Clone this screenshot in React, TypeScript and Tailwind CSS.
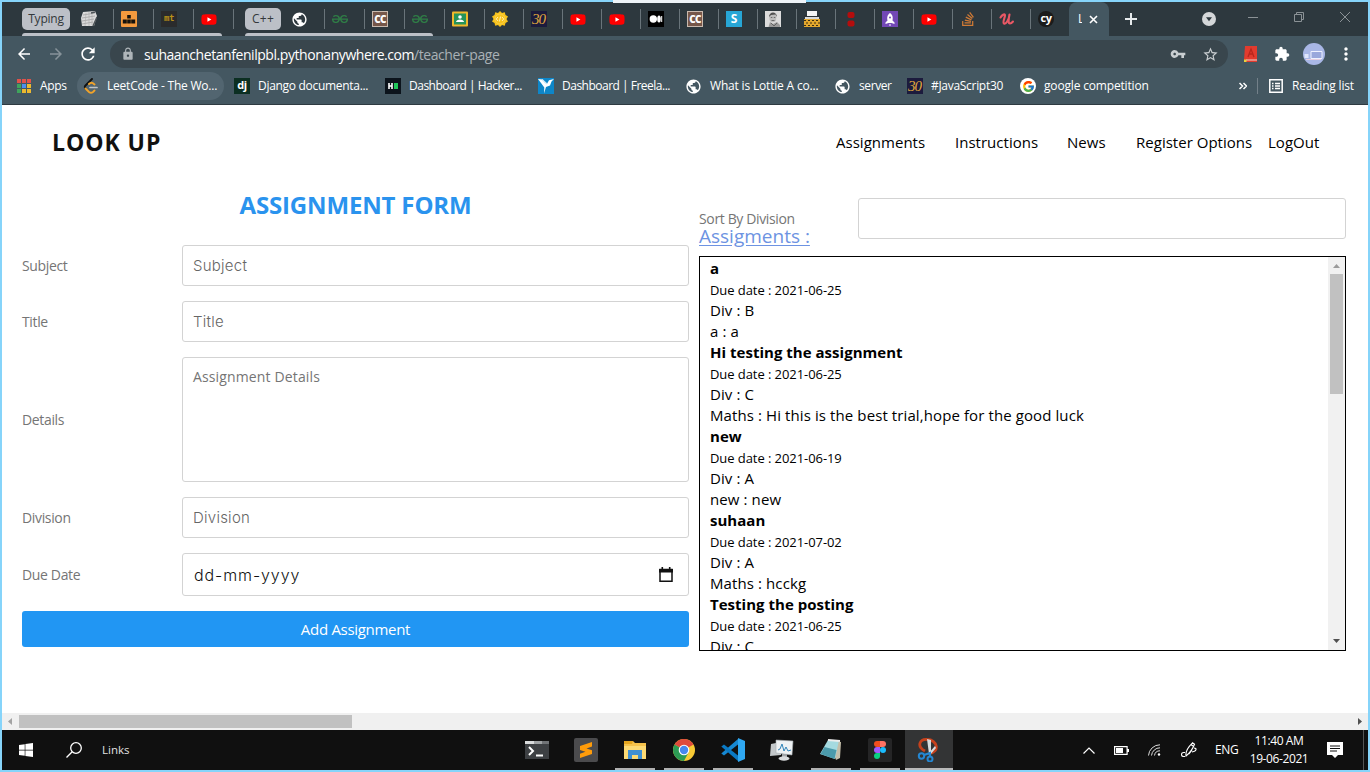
import React from "react";
import { FaYoutube, FaStackOverflow, FaWindows } from "react-icons/fa";
import { FcGoogle } from "react-icons/fc";
import {
  MdVpnKey, MdExtension, MdLock, MdStarBorder, MdMoreVert, MdArrowBack, MdArrowForward,
  MdRefresh, MdPublic,
} from "react-icons/md";
import { SiGeeksforgeeks } from "react-icons/si";

const Youtube = () => <FaYoutube className="h-[17px] w-4 bg-[linear-gradient(#fff,#fff)] bg-[length:6px_6px] bg-center bg-no-repeat text-[#f00]" />;
const Geeks = () => <SiGeeksforgeeks className="size-4 text-[#2f7d46]" />;
const Globe = () => <MdPublic className="size-[17px] text-white" />;
const StackOverflow = () => <FaStackOverflow className="size-4 text-[#d07a35]" />;
const CodeChef = () => (
  <div className="flex size-4 items-center justify-center border border-[#c9b9ae] bg-[#76574a] font-['Open_Sans'] text-[10px] font-extrabold tracking-[-0.8px] text-white">CC</div>
);
const Thirty = () => (
  <div className="flex size-4 items-center justify-center bg-[#1c1b3d] pr-px font-['Liberation_Serif'] text-[15px] tracking-[-1px] text-[#e0a83c] italic">30</div>
);
const Keyboard = () => (
  <svg viewBox="0 0 16 16" className="size-4">
    <path d="M2 1 14 0l2 5-3 10H1L0 7z" fill="#dadada" />
    <path d="m2 4 12-2M1 7l13-2M1 10l12-2M1 13l11-2" stroke="#a0a0a0" strokeWidth=".8" />
    <path d="m5 2-1 13M8 1v14M11 1v13" stroke="#b0b0b0" strokeWidth=".7" />
    <path d="m10 2 4-1M12 15l4-9" stroke="#4d5357" strokeWidth="1.500" />
  </svg>
);
const Podium = () => (
  <svg viewBox="0 0 16 16" className="size-4">
    <rect width="16" height="16" rx="1" fill="#f39a3e" />
    <path d="M6.200 4h3.600v3.600H6.200zM1.800 8.500h4v4h-4zM6.200 8.500h3.600v4H6.200zM10.200 8.500h4v4h-4z" fill="#15120c" />
  </svg>
);
const MonkeyType = () => (
  <div className="flex size-4 items-center justify-center bg-[#2a2b2c] font-['DejaVu_Sans_Mono'] text-[9px] font-bold tracking-[-0.5px] text-[#b89018]">mt</div>
);
const Classroom = () => (
  <svg viewBox="0 0 16 16" className="size-4">
    <rect width="16" height="15" y=".5" rx="1" fill="#f1b92c" />
    <rect x="2" y="2.500" width="12" height="11" fill="#27945a" />
    <circle cx="8" cy="6" r="1.800" fill="#fff" />
    <path d="M4 11c0-3.500 8-3.500 8 0z" fill="#fff" />
  </svg>
);
const Sun = () => (
  <svg viewBox="0 0 16 16" className="size-4">
    <path d="m8 0 2 2 2.800-.8.700 2.800L16 5.500 14.500 8l1.500 2.500-2.500 1.500-.7 2.800L10 14l-2 2-2-2-2.800.8-.7-2.800L0 10.500 1.500 8 0 5.500 2.500 4l.7-2.800L6 2z" fill="#f8c21a" />
    <circle cx="8" cy="8" r="5" fill="none" stroke="#f9d35c" strokeWidth=".7" />
    <path d="M6 6 4.300 8 6 10M10 6l1.700 2L10 10M8.600 5.500 7.400 10.500" fill="none" stroke="#fff2c4" strokeWidth=".9" />
  </svg>
);
const Medium = () => (
  <svg viewBox="0 0 16 16" className="size-4">
    <rect width="16" height="16" fill="#000" />
    <circle cx="5.300" cy="8" r="3.700" fill="#fff" />
    <ellipse cx="11" cy="8" rx="1.800" ry="3.500" fill="#fff" />
    <path d="M13.700 5v6" stroke="#fff" />
  </svg>
);
const LetterS = () => (
  <div className="flex size-4 items-center justify-center bg-[#27a6d6] font-['Open_Sans'] text-[12px] font-bold text-white">S</div>
);
const Portrait = () => (
  <svg viewBox="0 0 16 16" className="size-4">
    <rect width="16" height="16" fill="#dcdcdc" />
    <path d="M3.500 16 5 11l3 2 4-2 3 3v2z" fill="#9a9a9a" />
    <ellipse cx="7.800" cy="6.800" rx="3.500" ry="4.500" fill="#bcbcbc" />
    <path d="M4 6c0-6 8-6 8 0l-1.500-2.500L6 4z" fill="#505050" />
    <path d="M5.800 6.500h1.500m1.500 0h1.500M6.500 9.500h3M6 12l3 3 3-3" stroke="#555" strokeWidth=".8" fill="none" />
  </svg>
);
const Typewriter = () => (
  <svg viewBox="0 0 16 16" className="size-4">
    <path d="M3 0h10v5H3z" fill="#f4f4f4" />
    <path d="M0 4h3v1h10V4h3v2H0z" fill="#2c3235" />
    <path d="M1 6h14v2H1z" fill="#d8dadb" />
    <path d="M0 8h16v8H0z" fill="#e3a72d" />
    <path d="M0 9.500h16M0 14.500h16" stroke="#3a2c12" strokeDasharray="2 2" />
    <path d="M2 12h14" stroke="#3a2c12" strokeDasharray="2 2" />
  </svg>
);
const RedDots = () => (
  <svg viewBox="0 0 16 16" className="size-4">
    <rect x="4.500" y="1" width="7" height="6" rx="2" fill="#b40d0d" />
    <rect x="4.500" y="9.500" width="7" height="6" rx="2" fill="#b40d0d" />
  </svg>
);
const Rocket = () => (
  <svg viewBox="0 0 16 16" className="size-4">
    <rect width="16" height="16" fill="#7248b6" />
    <path d="M8 2c3 2 3 5 2.500 7.500l2 2v1.500l-3-1H6.500l-3 1v-1.500l2-2C5 7 5 4 8 2z" fill="#fff" />
    <circle cx="8" cy="6.500" r="1" fill="#7248b6" />
    <path d="M8 13v2" stroke="#fff" />
  </svg>
);
const Udemy = () => (
  <svg viewBox="0 0 16 16" className="size-4">
    <path d="M1.500 6.500C3 4 5.500 2.500 6 4S3 11.500 5 12.500s5-4 5.500-9C9.500 8 9 12.500 11 12.500c1.200 0 2-.8 3-2" fill="none" stroke="#ea5865" strokeWidth="2.100" strokeLinecap="round" strokeLinejoin="round" />
  </svg>
);
const Cy = () => (
  <div className="flex size-4 items-center justify-center rounded-full bg-[#1b1b1b] pb-0.5 font-['Open_Sans'] text-[11px] font-bold tracking-[-0.5px] text-white">cy</div>
);

const shortTabs: React.FC[] = [
  Sun, Thirty, Youtube, Youtube, Medium, CodeChef, LetterS, Portrait, Typewriter, RedDots, Rocket,
  Youtube, StackOverflow, Udemy, Cy,
];

function Tab({ icon: Icon, wide }: { icon: React.FC; wide?: boolean }) {
  return (
    <div className={wide ? "flex h-5 w-10 items-center border-l border-[#69747a] pl-[7px]" : "flex h-5 w-[39px] items-center border-l border-[#69747a] pl-[7px]"}>
      <Icon />
    </div>
  );
}

function TabStrip() {
  return (
    <div className="flex h-[34px] items-center bg-[#2d383e] pl-5 text-[#dfe3e6]">
      <div className="relative flex h-full items-center">
        <div className="flex h-[22px] w-12 items-center justify-center rounded-[5px] bg-[#bcc0c7] text-[12px] tracking-[-0.2px] text-[#33383b]">Typing</div>
        <div className="flex w-[43px] pl-[11px]"><Keyboard /></div>
        <Tab icon={Podium} wide /><Tab icon={MonkeyType} wide /><Tab icon={Youtube} wide />
        <div className="absolute bottom-0 left-0 h-[3px] w-[200px] rounded-t-[3px] bg-[#bcc0c7]" />
      </div>
      <div className="h-5 w-3 border-l border-[#69747a]" />
      <div className="relative flex h-full items-center">
        <div className="flex h-[22px] w-9 items-center justify-center rounded-[5px] bg-[#bcc0c7] text-[12px] tracking-[0.3px] text-[#33383b]">C++</div>
        <div className="flex w-[43px] pl-[10px]"><Globe /></div>
        <Tab icon={Geeks} wide /><Tab icon={CodeChef} wide /><Tab icon={Geeks} wide />
        <div className="absolute bottom-0 left-0 h-[3px] w-[188px] rounded-t-[3px] bg-[#bcc0c7]" />
      </div>
      <Tab icon={Classroom} wide />
      {shortTabs.map((I, i) => <Tab key={i} icon={I} />)}
      <div className="flex h-full w-10 items-center gap-[7px] rounded-t-lg bg-[#445761] pl-[9px] text-[12px] text-white">
        <span className="w-[4px] overflow-hidden">L</span>
        <svg viewBox="0 0 9 9" className="size-[9px]"><path d="m1 1 7 7M8 1 1 8" stroke="#fff" strokeWidth="1.600" /></svg>
      </div>
      <svg viewBox="0 0 12 12" className="ml-4 size-3"><path d="M6 0v12M0 6h12" stroke="#e6eaec" strokeWidth="2" /></svg>
      <svg viewBox="0 0 14 14" className="ml-[65px] size-[14px]"><circle cx="7" cy="7" r="7" fill="#d4d7d9" /><path d="M4 5.300h6L7 9.300z" fill="#2d383e" /></svg>
      <svg viewBox="0 0 102 12" className="mb-1 ml-8 h-3 w-[102px]" fill="none" stroke="#8b9296">
        <path d="M0 6.500h10M46.500 3.500h7v7h-7zM48.500 3.500v-2h7v7h-2M92 1l10 10M102 1 92 11" />
      </svg>
    </div>
  );
}

function AddressBar() {
  return (
    <div className="flex h-9 items-center bg-[#445761] text-white">
      <MdArrowBack className="ml-[13px] size-[18px]" />
      <MdArrowForward className="ml-[14px] size-[18px] text-[#87939a]" />
      <MdRefresh className="ml-[13px] size-5" />
      <div className="ml-[12px] flex h-7 w-[1118px] items-center rounded-full bg-[#39464d] pl-[11px]">
        <MdLock className="size-[14px] text-[#aeb5b9]" />
        <span className="ml-[7px] w-[988px] pl-0.5 text-[14px] tracking-[-0.44px] whitespace-nowrap text-white">suhaanchetanfenilpbl.pythonanywhere.com<span className="text-[#a9b1b6]">/teacher-page</span></span>
      </div>
      <div className="ml-[-58px] flex items-center gap-4">
        <MdVpnKey className="size-4 text-[#c9ced1]" />
        <MdStarBorder className="size-[17px] text-[#c9ced1]" />
      </div>
      <svg viewBox="0 0 14 16" className="ml-[25px] h-4 w-[14px] shrink-0">
        <path d="M1 0h12v16H2L0 14z" fill="#e23b2e" /><path d="M4 11 7 3l3 8M5 8h4" stroke="#b9261d" fill="none" strokeWidth="1.300" />
        <path d="M2 13.500h11v1H2z" fill="#f0d6d0" /><path d="M0 13.500h2.500V16H0z" fill="#e8d33c" />
      </svg>
      <MdExtension className="ml-4 size-4 shrink-0" />
      <svg viewBox="0 0 22 22" className="ml-[13px] size-[22px] shrink-0">
        <circle cx="11" cy="11" r="11" fill="#a9b7e6" /><path d="M8 8.500h11v7H8z" fill="#9aa8dc" stroke="#eef1ff" /><path d="M1.500 11h4v4h-4z" fill="#dfe5fb" /><path d="M3 16.500h15" stroke="#e5cfe0" />
      </svg>
      <MdMoreVert className="ml-[11px] size-5 shrink-0" />
    </div>
  );
}

const Django = () => <div className="flex size-4 items-center justify-center bg-[#0c2f22] pb-0.5 font-['Open_Sans'] text-[11px] font-bold text-white">dj</div>;
const Hacker = () => (
  <svg viewBox="0 0 16 16" className="size-4"><rect width="16" height="16" fill="#0c141c" /><path d="M4 5v6M7 5v6M4 8h3" stroke="#fff" strokeWidth="1.600" /><path d="M9 5h4v6H9z" fill="#1fc75a" /></svg>
);
const Freelancer = () => (
  <svg viewBox="0 0 16 16" className="size-4"><rect width="16" height="16" fill="#0e86c8" /><path d="m0 1 4.500.5L7 4.500l2 1.200 2-3.500L16 1l-2.500 2.500-1.500 4L8 9l-2 6.500.300-6L3 5z" fill="#fff" /><path d="M4 1.500 9 6" stroke="#cde8f5" strokeWidth="1.300" /></svg>
);
const Leet = () => (
  <svg viewBox="0 0 16 16" className="size-4" fill="none" strokeLinecap="round">
    <path d="M9 1 2.500 7.500Q1 9 2.500 10.500" stroke="#111" strokeWidth="1.900" />
    <path d="m2.500 10.500 3.500 3.500q2 1.500 4 0l1.500-1.500M6 6q2-2 4-.8l1.500 1.300" stroke="#f1a32a" strokeWidth="1.900" />
    <path d="M7 9.500h7" stroke="#bfc4c6" strokeWidth="1.700" />
  </svg>
);
const GoogleMark = () => <div className="flex size-4 items-center justify-center rounded-full bg-white"><FcGoogle className="size-[13px]" /></div>;

const bookmarks: { icon: React.FC; label: string; box: string }[] = [
  { icon: Leet, label: "LeetCode - The Wo...", box: "ml-[10px] w-[147px] pl-[6px] rounded-full bg-[#526570] tracking-[-0.22px]" },
  { icon: Django, label: "Django documenta...", box: "w-[151px] pl-[10px] tracking-[-0.3px]" },
  { icon: Hacker, label: "Dashboard | Hacker...", box: "w-[153px] pl-[10px] tracking-[-0.5px]" },
  { icon: Freelancer, label: "Dashboard | Freela...", box: "w-[147px] pl-[10px] tracking-[-0.5px]" },
  { icon: Globe, label: "What is Lottie A co...", box: "w-[149px] pl-[10px] tracking-[-0.18px]" },
  { icon: Globe, label: "server", box: "w-[73px] pl-[10px] tracking-[-0.4px]" },
  { icon: Thirty, label: "#JavaScript30", box: "w-[113px] pl-[10px] tracking-[-0.3px]" },
  { icon: GoogleMark, label: "google competition", box: "w-[150px] pl-[10px] tracking-[-0.17px]" },
];

function Bookmarks() {
  return (
    <div className="flex h-[33px] items-start border-b border-[#2e3a41] bg-[#445761] text-[12px] text-white">
      <div className="flex h-7 items-center pl-[15px]">
        <svg viewBox="0 0 14 14" className="size-[14px]">
          <path d="M0 0h4v4H0zM5 0h4v4H5zM10 0h4v4h-4z" fill="#e0524a" />
          <path d="M0 5h4v4H0zM0 10h4v4H0z" fill="#3fa45c" /><path d="M5 5h4v4H5z" fill="#4c8fee" />
          <path d="M10 5h4v4h-4zM5 10h4v4H5zM10 10h4v4h-4z" fill="#edb92f" />
        </svg>
        <span className="ml-[9px] w-[27px] tracking-[-0.3px]">Apps</span>
      </div>
      {bookmarks.map(({ icon: Icon, label, box }) => (
        <div key={label} className={"flex h-7 items-center gap-2 whitespace-nowrap " + box}><Icon />{label}</div>
      ))}
      <div className="ml-auto flex h-7 items-center pr-[14px]">
        <svg viewBox="0 0 8 8" className="size-2" fill="none" stroke="#fff" strokeWidth="1.500"><path d="m.5 1 3 3-3 3M4.500 1l3 3-3 3" /></svg>
        <div className="mr-[11px] ml-[10px] h-4 w-px bg-[#738089]" />
        <svg viewBox="0 0 14 14" className="size-[14px]" fill="none" stroke="#fff"><path d="M.8.8h12.400v12.400H.8z" strokeWidth="1.500" /><path d="M3 4.500h1.500M6 4.500h5M3 7h1.500M6 7h5M3 9.500h1.500M6 9.500h5" strokeWidth="1.300" /></svg>
        <span className="ml-[9px] w-[62px] tracking-[-0.2px] whitespace-nowrap">Reading list</span>
      </div>
    </div>
  );
}

const inputStyle = "h-[41px] w-[507px] rounded-[3px] border border-[#d3d3d3] px-[10px] font-['Inter'] text-[15px] font-light tracking-[0.25px] text-black outline-none placeholder:text-[#666]";
const labelStyle = "w-40 text-[14px] tracking-[-0.35px] text-[#757575]";

function AssignmentForm() {
  return (
    <form className="flex w-[667px] flex-col gap-[15px]">
      <h2 className="mb-[7px] h-[34px] text-center text-[24px] leading-[32px] font-bold tracking-[-0.15px] text-[#2a93ee]">ASSIGNMENT FORM</h2>
      <div className="flex items-center"><label className={labelStyle}>Subject</label><input className={inputStyle} placeholder="Subject" /></div>
      <div className="flex items-center"><label className={labelStyle}>Title</label><input className={inputStyle} placeholder="Title" /></div>
      <div className="flex items-center"><label className={labelStyle}>Details</label>
        <textarea className="h-[125px] w-[507px] resize-none rounded-[3px] border border-[#d3d3d3] px-[10px] py-[8px] text-[14px] tracking-[0.14px] outline-none placeholder:text-[#757575]" placeholder="Assignment Details" />
      </div>
      <div className="flex items-center"><label className={labelStyle}>Division</label><input className={inputStyle} placeholder="Division" /></div>
      <div className="flex items-center"><label className={labelStyle}>Due Date</label>
        <div className="flex h-[43px] w-[507px] items-center justify-between rounded-[3px] border border-[#d3d3d3] pr-[15px] pl-[11px] font-['Inter'] text-[16px] font-light text-[#111]">
          <span className="tracking-[0.9px]">dd-mm-yyyy</span>
          <svg viewBox="0 0 14 15" className="h-[15px] w-[14px]"><path d="M1 2.500h12v11.700H1z" fill="none" stroke="#111" strokeWidth="1.500" /><path d="M0 2h14v3.500H0zM2.500 0h1.600v3H2.500zM9.900 0h1.600v3H9.900z" fill="#111" /></svg>
        </div>
      </div>
      <button type="button" className="h-9 rounded-[3px] bg-[#2196f3] text-[15px] tracking-[-0.3px] text-white">Add Assignment</button>
    </form>
  );
}

const posts = [
  ["a", "2021-06-25", "Div : B", "a : a"],
  ["Hi testing the assignment", "2021-06-25", "Div : C", "Maths : Hi this is the best trial,hope for the good luck"],
  ["new", "2021-06-19", "Div : A", "new : new"],
  ["suhaan", "2021-07-02", "Div : A", "Maths : hcckg"],
  ["Testing the posting", "2021-06-25", "Div : C"],
];

function AssignmentList() {
  return (
    <section className="w-[647px]">
      <div className="flex h-[51px] items-start justify-between pt-[2px]">
        <div className="pt-[11px]">
          <div className="h-[18px] text-[14px] leading-[20px] tracking-[-0.36px] text-[#757575]">Sort By Division</div>
          <div className="text-[19px] leading-[18px] tracking-[0px] text-[#6d93e2] underline underline-offset-2">Assigments :</div>
        </div>
        <div className="h-[41px] w-[488px] rounded-[3px] border border-[#d3d3d3]" />
      </div>
      <div className="mt-[9px] flex h-[395px] justify-between overflow-hidden border border-black text-black">
        <div className="overflow-hidden pt-[1px] pl-[10px] text-[15px] leading-[21px]">
          {posts.map(([title, due, div, body]) => (
            <div key={title}>
              <div className="h-[21px] font-bold tracking-[0.02px]">{title}</div>
              <div className="h-[21px] pt-[1px] text-[13px] tracking-[-0.07px]">Due date : {due}</div>
              <div className="h-[21px] tracking-[0.1px]">{div}</div>
              {body && <div className="h-[21px] tracking-[0.1px]">{body}</div>}
            </div>
          ))}
        </div>
        <div className="flex w-[17px] flex-col items-center bg-[#f1f1f1]">
          <svg viewBox="0 0 17 17" className="size-[17px]"><path d="M5 11h7L8.500 7z" fill="#9b9b9b" /></svg>
          <div className="h-[120px] w-[13px] bg-[#c1c1c1]" />
          <svg viewBox="0 0 17 17" className="mt-auto size-[17px]"><path d="M5 6h7l-3.500 4z" fill="#505050" /></svg>
        </div>
      </div>
    </section>
  );
}

const taskApps: { icon: React.ReactNode; open?: boolean; active?: boolean }[] = [
  { icon: <svg viewBox="0 0 24 24" className="size-6"><path d="M0 3h24v18H0z" fill="#3d4043" /><path d="M0 3h9v3H0z" fill="#d9dbdc" /><path d="M9 3h8v3H9z" fill="#a0a3a5" /><path d="M17 3h7v3h-7z" fill="#707376" /><path d="m4 9 4 4-4 4M11 17.500h7" fill="none" stroke="#fff" strokeWidth="2" /></svg> },
  { icon: <svg viewBox="0 0 24 24" className="size-6"><rect width="24" height="24" rx="2" fill="#4b4b4d" /><path d="m6 8 12-4v4.500L12.500 10.500l5.500 1.700V16L6 20v-4.300l5.500-2L6 12z" fill="#ff9c0a" /></svg> },
  { open: true, icon: <svg viewBox="0 0 24 24" className="size-6"><path d="M1 3h9l2 2h11v16H1z" fill="#f5c24b" /><path d="M1 3h9l-1 3H1z" fill="#e5a51e" /><path d="M1 8h22v13H1z" fill="#fcda74" /><path d="M5 12h14v9h-4v-4H9v4H5z" fill="#3f8fd2" /></svg> },
  { open: true, icon: <svg viewBox="0 0 24 24" className="size-6"><circle cx="12" cy="12" r="11" fill="#f7c934" /><path d="M12 12 2.500 6.500a11 11 0 0 1 19 0z" fill="#de4a3d" /><path d="M2.500 6.500a11 11 0 0 0 9.500 16.500l4.500-8.500L12 12z" fill="#2c9b54" /><circle cx="12" cy="12" r="5.300" fill="#fff" /><circle cx="12" cy="12" r="4.200" fill="#4688ef" /></svg> },
  { open: true, icon: <svg viewBox="0 0 24 24" className="size-6"><path d="M17 6.500 3 17.500l-2.700-2L17 1z" fill="#1688d2" /><path d="M17 17.500 3 6.500.3 8.500 17 23z" fill="#0a79c4" /><path d="m17 0 7 3v18l-7 3z" fill="#2fa8f2" /></svg> },
  { icon: <svg viewBox="0 0 24 24" className="size-6"><path d="m1 6 10-2v13L0 18z" fill="#c3c8ca" /><path d="m6 2 17 1-1 14-16-2z" fill="#eef2f4" stroke="#a5abae" strokeWidth=".6" /><path d="m8 12 2-1 2-5 2 7 2-4 2 4 3-1" fill="none" stroke="#3184b8" /><path d="M12 16h5v4h-5z" fill="#9fa4a7" /><ellipse cx="14" cy="20.500" rx="5.500" ry="2.200" fill="#d8dbdd" /></svg> },
  { open: true, icon: <svg viewBox="0 0 24 24" className="size-6"><path d="m9 2 13 2-1 16-4 2z" fill="#c4beaa" /><path d="M9 2h11l-4 19-15-5z" fill="#a5dae0" /><path d="m5.500 9 12 3-2 9-14-5z" fill="#4b9aab" /><path d="m9 2 12 1" stroke="#eee" strokeWidth="2" /></svg> },
  { open: true, icon: <svg viewBox="0 0 24 24" className="size-6"><rect width="24" height="24" rx="2" fill="#252526" /><path d="M12 3H9a3 3 0 0 0 0 6h3z" fill="#f24e1e" /><path d="M12 3h3a3 3 0 0 1 0 6h-3z" fill="#ff7262" /><path d="M12 9H9a3 3 0 0 0 0 6h3z" fill="#a259ff" /><circle cx="15" cy="12" r="3" fill="#1abcfe" /><path d="M12 15H9a3 3 0 1 0 3 3z" fill="#0acf83" /></svg> },
  { open: true, active: true, icon: <svg viewBox="0 0 24 24" className="size-6"><path d="M8 13C-1 8 3 1 10 1.500c11 0 13 13 2 14" fill="none" stroke="#c6411c" strokeWidth="2.800" /><path d="m10 1 2 15 2-1V2zM18 8l-7 8 2 1 6-7z" fill="#d8dcde" /><circle cx="4.500" cy="18" r="2.700" fill="none" stroke="#2487d3" strokeWidth="2" /><circle cx="13" cy="21" r="2.500" fill="none" stroke="#2487d3" strokeWidth="2" /><path d="m7 17 6-2v4" stroke="#2487d3" strokeWidth="2" fill="none" /></svg> },
];

function Taskbar() {
  return (
    <div className="flex h-10 items-center bg-[#101010] text-[12px] text-white">
      <FaWindows className="ml-4 size-4" />
      <svg viewBox="0 0 16 16" className="ml-[32px] size-4" fill="none" stroke="#fff" strokeWidth="1.300"><circle cx="10" cy="6" r="5.300" /><path d="M6.200 9.800.5 15.500" /></svg>
      <span className="ml-5 w-[411px] text-[11.500px] tracking-[0px] text-[#e0e0e0]">Links</span>
      <div className="flex h-full">
        {taskApps.map(({ icon, open, active }, i) => (
          <div key={i} className={active ? "relative flex h-full w-12 items-center justify-center bg-[#333435]" : "relative mr-px flex h-full w-12 items-center justify-center"}>
            {icon}
            {open && <div className={active ? "absolute bottom-0 h-0.5 w-12 bg-[#b9b9b9]" : "absolute bottom-0 h-0.5 w-10 bg-[#b0b0b0]"} />}
          </div>
        ))}
      </div>
      <div className="ml-auto flex items-center">
        <svg viewBox="0 0 12 7" className="h-[7px] w-3" fill="none" stroke="#fff" strokeWidth="1.200"><path d="m.5 6.500 5.500-5.500 5.500 5.500" /></svg>
        <svg viewBox="0 0 15 9" className="ml-[19px] h-[9px] w-[15px]"><path d="M.6.600h12.500v7.800H.6z" fill="none" stroke="#fff" strokeWidth="1.200" /><path d="M2 2h7v5H2zM13 3h2v3h-2z" fill="#fff" /></svg>
        <svg viewBox="0 0 13 12" className="ml-[19px] h-3 w-[13px]" fill="none" stroke="#ddd"><path d="M.5 11.500A11.500 11.500 0 0 1 12 .8M3.500 11.500A8.500 8.500 0 0 1 12 3.800M6.500 11.500A5.500 5.500 0 0 1 12 6.800" /><circle cx="11" cy="10.500" r="1.200" fill="#fff" stroke="none" /></svg>
        <svg viewBox="0 0 16 16" className="ml-5 size-4" fill="none" stroke="#fff" strokeWidth="1.100"><path d="M5 14Q4 8 11.500.8l2 1.400Q11 9 5 14zM10 2.500l2 1.500M4 10.500H2.500a1.800 1.800 0 0 0 0 4H4M11 10c5-1 5-4 2-4M8 12l3-4" /></svg>
        <span className="ml-[18px] w-[23px] tracking-[-0.4px]">ENG</span>
        <div className="ml-3 flex w-[58px] flex-col items-center text-[12px] leading-[18px] tracking-[-0.4px] whitespace-nowrap"><span>11:40 AM</span><span>19-06-2021</span></div>
        <svg viewBox="0 0 16 16" className="ml-[19px] size-4"><path d="M0 0h16v13h-5l-3 3-3-3H0z" fill="#fff" /><path d="M3 4h10M3 6.500h10M3 9h7" stroke="#101010" /></svg>
        <div className="ml-5 h-10 w-[5px] border-l border-[#555]" />
      </div>
    </div>
  );
}

export default function App() {
  return (
    <div className="flex h-[772px] w-[1370px] flex-col overflow-hidden border-2 border-[#86d4fa] bg-white font-['Open_Sans',sans-serif]">
      <div className="absolute top-0 left-[613px] h-[3px] w-[193px] bg-[#eef4f8]" />
      <TabStrip />
      <AddressBar />
      <Bookmarks />
      <header className="flex h-[76px] items-center pr-[50px] pb-px pl-[50px] text-black">
        <h1 className="w-[120px] text-[23px] font-bold tracking-[0.95px] whitespace-nowrap text-[#111]">LOOK UP</h1>
        <nav className="ml-auto flex text-[15px] tracking-[0.02px] whitespace-nowrap">
          <span className="w-[119px]">Assignments</span><span className="w-[112px]">Instructions</span>
          <span className="w-[69px]">News</span><span className="w-[132px]">Register Options</span><span className="w-[50px]">LogOut</span>
        </nav>
      </header>
      <main className="flex h-[532px] gap-[10px] pl-5">
        <div className="pt-[8px]"><AssignmentForm /></div>
        <div className="pt-[15px]"><AssignmentList /></div>
      </main>
      <div className="flex h-[17px] items-center bg-[#f0f0f0]">
        <svg viewBox="0 0 17 17" className="size-[17px]"><path d="M10 5v7L6 8.500z" fill="#a3a3a3" /></svg>
        <div className="h-[13px] w-[333px] bg-[#c1c1c1]" />
        <svg viewBox="0 0 17 17" className="ml-auto size-[17px]"><path d="M7 5v7l4-3.500z" fill="#505050" /></svg>
      </div>
      <Taskbar />
    </div>
  );
}
